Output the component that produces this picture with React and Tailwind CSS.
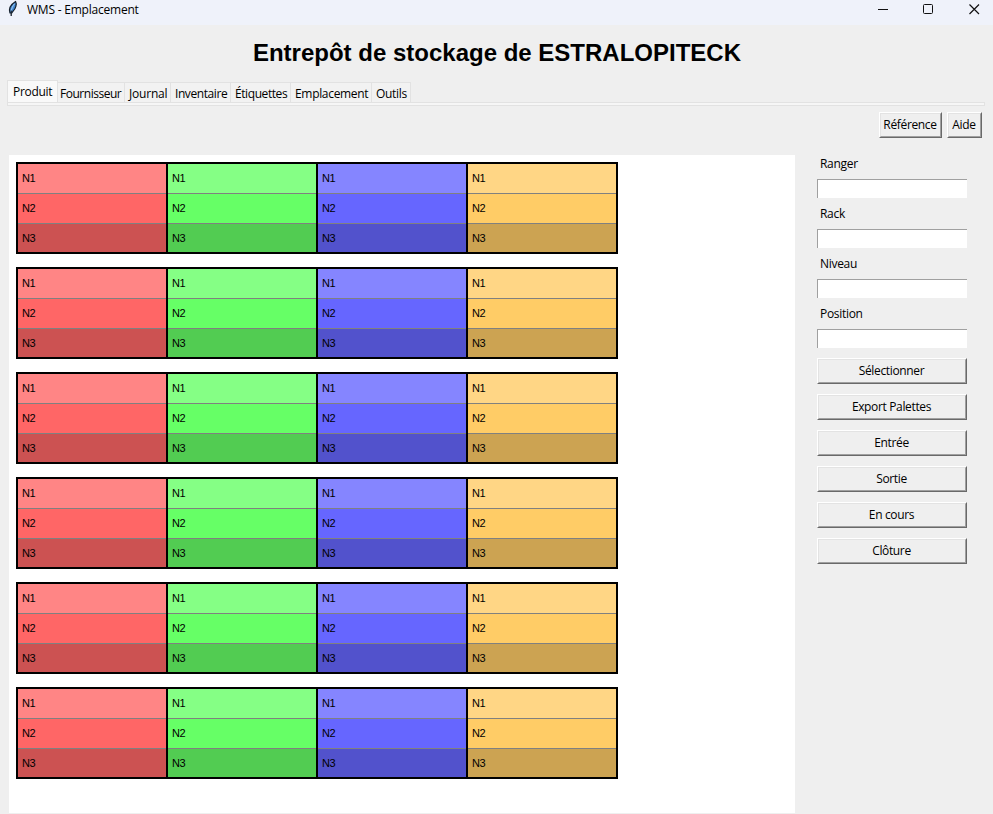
const TABS = [
  ['Fournisseur', 'w-[67px] pl-[2px] tracking-[-0.48px]'],
  ['Journal', 'w-[46px] pl-[4px] tracking-[-0.2px]'],
  ['Inventaire', 'w-[60px] pl-[4px] tracking-[-0.42px]'],
  ['Étiquettes', 'w-[60px] pl-[4px] tracking-[-0.42px]'],
  ['Emplacement', 'w-[81px] pl-[4px] tracking-[-0.32px]'],
  ['Outils', 'w-[39px] pl-[4px] tracking-[-0.3px]'],
];

const ZONES = [
  ['bg-[#ff8585]', 'bg-[#ff6666]', 'bg-[#cc5252]'],
  ['bg-[#85ff85]', 'bg-[#66ff66]', 'bg-[#52cc52]'],
  ['bg-[#8585ff]', 'bg-[#6666ff]', 'bg-[#5252cc]'],
  ['bg-[#ffd685]', 'bg-[#ffcc66]', 'bg-[#cca352]'],
];

const FIELDS = ['Ranger', 'Rack', 'Niveau', 'Position'];
const ACTIONS = ['Sélectionner', 'Export Palettes', 'Entrée', 'Sortie', 'En cours', 'Clôture'];

function Feather() {
  return (
    <svg width="12" height="18" viewBox="0 0 12 18" className="shrink-0">
      <path d="M3 13C1.800 9.500 3 5 8.600 1.500c1.500 2.500 0 7.500-2.400 9.500L4.800 13z" fill="#3f86d2" stroke="#17222e" strokeWidth="1.200" />
      <path d="M7.500 3.800C5.700 6 4.700 8.500 4 11.500" stroke="#a9d3f5" strokeWidth="1" fill="none" />
      <path d="M4.200 10.500L4.200 16" stroke="#17222e" strokeWidth="1.300" fill="none" />
    </svg>
  );
}

function TkButton({ children, className }) {
  return (
    <button className={`block h-[26px] border border-t-white border-l-white border-r-[#696969] border-b-[#696969] ${className}`}>
      <span className="flex h-full items-center justify-center whitespace-nowrap border border-t-[#e3e3e3] border-l-[#e3e3e3] border-r-[#a0a0a0] border-b-[#a0a0a0] pr-px tracking-[-0.35px]">
        {children}
      </span>
    </button>
  );
}

function Rack() {
  return (
    <div className="flex h-[92px] w-[602px] gap-[2px] border-2 border-black bg-black font-['Liberation_Sans',sans-serif] text-[11px] tracking-[-0.4px]">
      {ZONES.map((levels, z) => (
        <div key={z} className="flex w-[148px] flex-col gap-px bg-[#808080]">
          {levels.map((color, i) => (
            <div key={i} className={`pl-[4px] leading-[29px] ${i === 2 ? 'h-[28px]' : 'h-[29px]'} ${color}`}>
              N{i + 1}
            </div>
          ))}
        </div>
      ))}
    </div>
  );
}

export default function App() {
  return (
    <div className="flex h-[814px] w-[993px] flex-col overflow-hidden bg-[#efefef] font-['Open_Sans','Noto_Sans',sans-serif] text-[12px] leading-[16px] tracking-[-0.3px] text-black">
      <header className="flex h-[25px] shrink-0 items-start bg-[#eff2fa] pl-[7px]">
        <Feather />
        <span className="ml-[8px] mt-[2px] tracking-[-0.22px]">WMS - Emplacement</span>
        <svg width="103" height="20" viewBox="0 0 103 20" className="ml-auto mr-[12px]" fill="none" stroke="#111" strokeWidth="1">
          <path d="M0 9.500h10" />
          <rect x="45.500" y="4.500" width="9" height="9" rx="1" />
          <path d="M91.500 4.500l9.500 9.500M101 4.500l-9.500 9.500" strokeWidth="1.200" />
        </svg>
      </header>
      <h1 className="mt-[12px] h-[32px] shrink-0 whitespace-nowrap pl-px text-center font-['Liberation_Sans',sans-serif] text-[24px] font-bold leading-[32px] tracking-normal">
        Entrepôt de stockage de ESTRALOPITECK
      </h1>
      <nav className="mt-[11px] flex h-[22px] shrink-0 items-end pl-[7px]">
        <div className="h-[22px] w-[51px] border border-b-0 border-[#e2e2e2] bg-[#f9f9f9] pl-[5px] pt-[3px]">Produit</div>
        {TABS.map(([label, cls]) => (
          <div key={label} className={`h-[20px] whitespace-nowrap border-r border-t border-[#e2e2e2] bg-[#f2f2f2] pt-[3px] ${cls}`}>
            {label}
          </div>
        ))}
      </nav>
      <div className="ml-[7px] h-[4px] w-[978px] shrink-0 border border-[#e2e2e2] bg-[#f6f6f6]" />
      <div className="mr-[11px] mt-[6px] flex shrink-0 justify-end gap-[5px]">
        <TkButton className="w-[63px]">Référence</TkButton>
        <TkButton className="w-[35px]">Aide</TkButton>
      </div>
      <main className="mt-[17px] flex h-[658px] shrink-0 pl-[9px]">
        <section className="flex w-[786px] flex-col gap-[13px] bg-white pl-[7px] pt-[7px]">
          {[0, 1, 2, 3, 4, 5].map((r) => (
            <Rack key={r} />
          ))}
        </section>
        <aside className="ml-[22px] w-[150px]">
          {FIELDS.map((name) => (
            <label key={name} className="block h-[50px] pt-px">
              <span className="block h-[23px] pl-[3px]">{name}</span>
              <input className="block h-[19px] w-full border-l border-t border-[#a0a0a0] bg-white outline-none" />
            </label>
          ))}
          <div className="mt-[3px] flex flex-col gap-[10px]">
            {ACTIONS.map((name) => (
              <TkButton key={name} className="w-full">{name}</TkButton>
            ))}
          </div>
        </aside>
      </main>
    </div>
  );
}
